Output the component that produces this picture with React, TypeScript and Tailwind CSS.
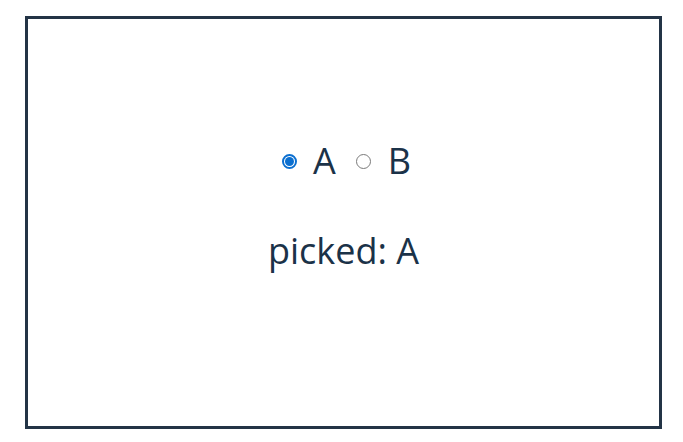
import React, { useState } from "react";

function Radio({ checked, onClick }: { checked: boolean; onClick: () => void }) {
  return (
    <span
      role="radio"
      aria-checked={checked}
      onClick={onClick}
      className={
        checked
          ? "w-[15px] h-[15px] min-w-[15px] shrink-0 rounded-full border-[2px] border-[#0b6fd0] flex items-center justify-center bg-white"
          : "w-[15px] h-[15px] min-w-[15px] shrink-0 rounded-full border-[1.5px] border-[#7a7a7a] bg-white"
      }
    >
      {checked ? <span className="w-[9px] h-[9px] shrink-0 rounded-full bg-[#0b6fd0]" /> : null}
    </span>
  );
}

export default function App() {
  const [picked, setPicked] = useState("A");
  return (
    <div className="w-[683px] h-[442px] bg-white pt-[16px] pl-[25px]" style={{ fontFamily: '"Open Sans", "Noto Sans", sans-serif' }}>
      <div className="w-[637px] h-[413px] border-[3px] border-[#233446] flex flex-col items-center pt-[115px] text-[#1b3248]">
        <div className="flex items-center text-[36px] leading-[54px] ml-[6px]">
          <label className="flex items-center cursor-pointer" onClick={() => setPicked("A")}>
            <Radio checked={picked === "A"} onClick={() => setPicked("A")} />
            <span className="ml-[16px]">A</span>
          </label>
          <label className="flex items-center ml-[20px] cursor-pointer" onClick={() => setPicked("B")}>
            <Radio checked={picked === "B"} onClick={() => setPicked("B")} />
            <span className="ml-[17px]">B</span>
          </label>
        </div>
        <div className="text-[36px] leading-[54px] mt-[36px]">picked: {picked}</div>
      </div>
    </div>
  );
}
